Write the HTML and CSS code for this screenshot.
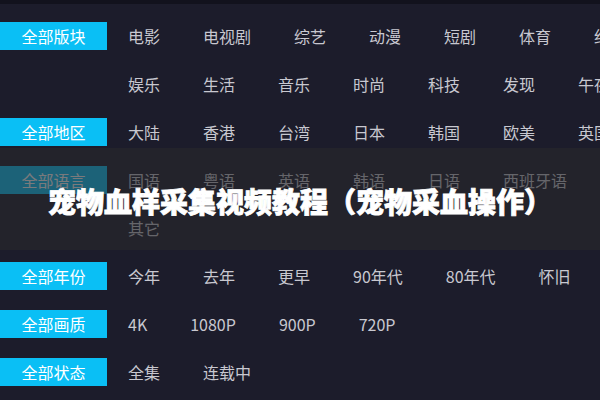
FILE: index.html
```html
<!DOCTYPE html>
<html lang="zh-CN">
<head>
    <meta charset="UTF-8">
    <meta name="viewport" content="width=device-width, initial-scale=1.0">
    <title>宠物血样采集视频教程</title>
    <link rel="stylesheet" href="styles.css">
</head>
<body>
    <div class="page">
        <div class="filter-row">
            <span class="filter-label">全部版块</span>
            <div class="filter-items">
                <a>电影</a><a>电视剧</a><a>综艺</a><a>动漫</a><a>短剧</a><a>体育</a><a>纪录</a>
                <a>娱乐</a><a>生活</a><a>音乐</a><a>时尚</a><a>科技</a><a>发现</a><a>午夜</a>
            </div>
        </div>

        <div class="filter-row">
            <span class="filter-label">全部地区</span>
            <div class="filter-items">
                <a>大陆</a><a>香港</a><a>台湾</a><a>日本</a><a>韩国</a><a>欧美</a><a>英国</a>
            </div>
        </div>

        <div class="filter-row">
            <span class="filter-label">全部语言</span>
            <div class="filter-items">
                <a>国语</a><a>粤语</a><a>英语</a><a>韩语</a><a>日语</a><a>西班牙语</a><a>其它</a>
            </div>
        </div>

        <div class="filter-row">
            <span class="filter-label">全部年份</span>
            <div class="filter-items">
                <a>今年</a><a>去年</a><a>更早</a><a>90年代</a><a>80年代</a><a>怀旧</a>
            </div>
        </div>

        <div class="filter-row">
            <span class="filter-label">全部画质</span>
            <div class="filter-items">
                <a>4K</a><a>1080P</a><a>900P</a><a>720P</a>
            </div>
        </div>

        <div class="filter-row">
            <span class="filter-label">全部状态</span>
            <div class="filter-items">
                <a>全集</a><a>连载中</a>
            </div>
        </div>
    </div>

    <div class="title-band">
        <h1>宠物血样采集视频教程（宠物采血操作）</h1>
    </div>
</body>
</html>
```

FILE: styles.css
```css
html, body {
    margin: 0;
    padding: 0;
    overflow: hidden;
}
body {
    width: 600px;
    height: 400px;
    background-color: #1c1c2b;
    border-top: 4px solid #12121d;
    box-sizing: border-box;
    font-family: "Noto Sans CJK SC", "Noto Sans", sans-serif;
    position: relative;
}
.page {
    width: 640px;
    padding-top: 18px;
}
.filter-row {
    display: flex;
    align-items: flex-start;
    margin-bottom: 20px;
}
.filter-label {
    flex: none;
    width: 107px;
    height: 28px;
    line-height: 28px;
    margin-right: 21px;
    background-color: #0abff5;
    color: #ffffff;
    font-size: 16px;
    text-align: center;
}
.filter-items {
    width: 502px;
    display: flex;
    flex-wrap: wrap;
    column-gap: 43px;
    row-gap: 20px;
}
.filter-items a {
    line-height: 28px;
    font-size: 16px;
    color: #c8c8d0;
    white-space: nowrap;
}
.title-band {
    position: absolute;
    left: 0;
    right: 0;
    top: 144px;
    height: 102px;
    background-color: rgba(40, 40, 44, 0.62);
    display: flex;
    align-items: center;
    justify-content: center;
}
.title-band h1 {
    margin: 0;
    padding-top: 4px;
    color: #ffffff;
    font-size: 28px;
    font-weight: 900;
    -webkit-text-stroke: 0.8px #ffffff;
}
```
